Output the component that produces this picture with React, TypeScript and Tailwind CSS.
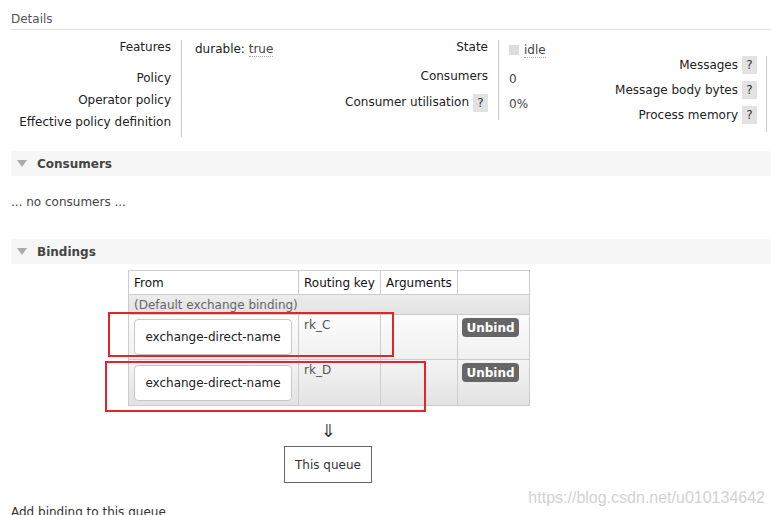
import React from 'react';

const Help: React.FC = () => (
  <span className="inline-flex items-center justify-center w-[15px] h-[18px] bg-[#e2e2e2] text-[#333] text-[12px] ml-[4px]">?</span>
);

const SectionHeader: React.FC<{ title: string }> = ({ title }) => (
  <div className="h-[25px] flex items-center bg-[#f6f6f6] pl-[6px]">
    <svg width="10" height="7" viewBox="0 0 10 7" className="mr-[10px]">
      <path d="M0 0 L10 0 L5 7 Z" fill="#aaa" />
    </svg>
    <span className="font-bold text-[#444] text-[12px]">{title}</span>
  </div>
);

const ExchangeBox: React.FC = () => (
  <div className="w-[158px] h-[36px] bg-white border border-[#c8c8c8] rounded-[4px] flex items-center justify-center text-[#222]">
    exchange-direct-name
  </div>
);

const UnbindButton: React.FC = () => (
  <span className="inline-flex items-center justify-center w-[57px] h-[19px] bg-[#666] rounded-[4px] text-white font-bold text-[12px]">
    Unbind
  </span>
);

export default function App() {
  return (
    <div
      className="w-[771px] h-[515px] overflow-hidden bg-white text-[12px] leading-[14px] text-[#333]"
      style={{ fontFamily: '"DejaVu Sans", Verdana, sans-serif' }}
    >
      {/* Details */}
      <div className="ml-[11px] pt-[12px] pb-[3px] border-b border-[#e0e0e0] text-[#555]">Details</div>

      <div className="flex mt-[10px] ml-[11px]">
        {/* block 1 */}
        <div className="flex">
          <div className="w-[171px] pr-[10px] text-right border-r border-[#ccc] text-[#222]">
            <div className="h-[31px]">Features</div>
            <div className="h-[22px]">Policy</div>
            <div className="h-[22px]">Operator policy</div>
            <div className="h-[22px]">Effective policy definition</div>
          </div>
          <div className="w-[150px] pl-[13px] text-[#222]">
            durable: <span className="text-[#444] border-b border-dotted border-[#aaa] inline-block mt-[2px] leading-[14px]">true</span>
          </div>
        </div>

        {/* block 2 */}
        <div className="flex">
          <div className="w-[167px] pr-[10px] text-right border-r border-[#ccc] text-[#222] h-[80px]">
            <div className="h-[29px]">State</div>
            <div className="h-[25px]">Consumers</div>
            <div className="h-[26px] flex items-start justify-end">
              <span className="mt-[1px]">Consumer utilisation</span>
              <Help />
            </div>
          </div>
          <div className="w-[90px] pl-[10px] text-[#444]">
            <div className="h-[29px] flex items-start pt-[3px]">
              <span className="w-[10px] h-[10px] bg-[#ddd] mt-[2px] mr-[5px]" />
              <span className="border-b border-dotted border-[#aaa]">idle</span>
            </div>
            <div className="h-[25px] pt-[3px]">0</div>
            <div className="h-[26px] pt-[3px]">0%</div>
          </div>
        </div>

        {/* block 3 */}
        <div className="w-[178px] mt-[16px] border-r border-[#ccc] h-[76px] pr-[9px] text-[#222]">
          <div className="h-[25px] flex justify-end items-start">
            <span className="mt-[2px]">Messages</span>
            <Help />
          </div>
          <div className="h-[25px] flex justify-end items-start">
            <span className="mt-[2px]">Message body bytes</span>
            <Help />
          </div>
          <div className="h-[25px] flex justify-end items-start">
            <span className="mt-[2px]">Process memory</span>
            <Help />
          </div>
        </div>
      </div>

      {/* Consumers */}
      <div className="ml-[11px] mt-[14px]">
        <SectionHeader title="Consumers" />
      </div>
      <div className="ml-[11px] mt-[19px] text-[#444]">... no consumers ...</div>

      {/* Bindings */}
      <div className="ml-[11px] mt-[30px]">
        <SectionHeader title="Bindings" />
      </div>

      <div className="relative mt-[6px]">
        <table className="ml-[128px] w-[401px] table-fixed border-collapse text-[12px]">
          <colgroup>
            <col className="w-[170px]" />
            <col className="w-[82px]" />
            <col className="w-[77px]" />
            <col className="w-[72px]" />
          </colgroup>
          <thead>
            <tr className="h-[24px] bg-white text-[#111]">
              <th className="border border-[#ccc] text-left font-normal px-[5px]">From</th>
              <th className="border border-[#ccc] text-left font-normal px-[5px]">Routing key</th>
              <th className="border border-[#ccc] text-left font-normal px-[5px]">Arguments</th>
              <th className="border border-[#ccc]" />
            </tr>
          </thead>
          <tbody>
            <tr className="h-[20px] bg-gradient-to-b from-[#ececec] to-[#e2e2e2]">
              <td colSpan={4} className="border border-[#ccc] px-[5px] text-[#666]">(Default exchange binding)</td>
            </tr>
            <tr className="h-[45px] bg-gradient-to-b from-[#fcfcfc] to-[#f0f0f0]">
              <td className="border border-[#ccc] px-[5px] align-middle"><ExchangeBox /></td>
              <td className="border border-[#ccc] px-[5px] align-top pt-[3px] text-[#555]">rk_C</td>
              <td className="border border-[#ccc]" />
              <td className="border border-[#ccc] align-top pt-[3px] px-[4px]"><UnbindButton /></td>
            </tr>
            <tr className="h-[46px] bg-gradient-to-b from-[#f4f4f4] to-[#e2e2e2]">
              <td className="border border-[#ccc] px-[5px] align-middle"><ExchangeBox /></td>
              <td className="border border-[#ccc] px-[5px] align-top pt-[3px] text-[#555]">rk_D</td>
              <td className="border border-[#ccc]" />
              <td className="border border-[#ccc] align-top pt-[3px] px-[4px]"><UnbindButton /></td>
            </tr>
          </tbody>
        </table>

        {/* red annotation boxes */}
        <div className="absolute left-[108px] top-[42px] w-[286px] h-[45px] border-2 border-[#e8222a]" />
        <div className="absolute left-[105px] top-[91px] w-[321px] h-[51px] border-2 border-[#e8222a]" />
      </div>

      <div className="flex flex-col items-center w-[656px] mt-[15px]">
        <div className="text-[18px] leading-[20px] text-[#333]">⇓</div>
        <div className="mt-[5px] w-[88px] h-[37px] border border-[#666] flex items-center justify-center text-[#333]">
          This queue
        </div>
      </div>

      <div className="flex items-end justify-between mt-[6px]">
        <div className="ml-[11px] mt-[16px] text-[#333]">Add binding to this queue</div>
        <div
          className="mr-[6px] mb-[14px] text-[16px] text-[#d2d2d2]"
          style={{ fontFamily: '"Liberation Sans", Arial, sans-serif' }}
        >
          https://blog.csdn.net/u010134642
        </div>
      </div>
    </div>
  );
}
